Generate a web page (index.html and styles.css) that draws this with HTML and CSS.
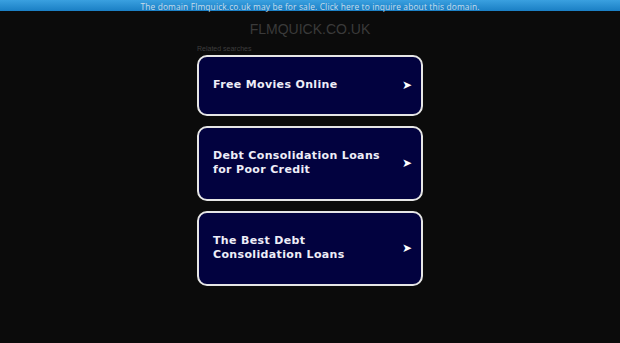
FILE: index.html
```html
<!DOCTYPE html>
<html lang="en">
<head>
    <meta charset="UTF-8">
    <title>flmquick.co.uk</title>
    <link rel="stylesheet" href="styles.css">
</head>
<body>
    <div class="sale-bar">
        <a href="#">The domain Flmquick.co.uk may be for sale. Click here to inquire about this domain.</a>
    </div>

    <div class="content">
        <div class="domain">FLMQUICK.CO.UK</div>

        <div class="related">
            <div class="related-title">Related searches</div>

            <a href="#" class="search-link">
                <span class="search-text">Free Movies Online</span>
                <span class="search-arrow">➤</span>
            </a>

            <a href="#" class="search-link">
                <span class="search-text">Debt Consolidation Loans for Poor Credit</span>
                <span class="search-arrow">➤</span>
            </a>

            <a href="#" class="search-link">
                <span class="search-text">The Best Debt Consolidation Loans</span>
                <span class="search-arrow">➤</span>
            </a>
        </div>
    </div>
</body>
</html>
```

FILE: styles.css
```css
body {
    margin: 0;
    padding: 0;
    background: #0b0b0b;
    font-family: "Liberation Sans", Arial, sans-serif;
}

.sale-bar {
    height: 11px;
    background: linear-gradient(to bottom, #3aa0e0 0%, #1a7fc4 100%);
    text-align: center;
    line-height: 10px;
}

.sale-bar a {
    color: #c8dcea;
    font-family: "Open Sans", sans-serif;
    font-size: 8.4px;
    letter-spacing: 0.15px;
    text-decoration: none;
}

.content {
    display: flex;
    flex-direction: column;
    align-items: center;
}

.domain {
    margin-top: 11px;
    height: 15px;
    line-height: 15px;
    font-size: 14px;
    color: #3a3a3a;
}

.related {
    width: 226px;
    margin-top: 7px;
}

.related-title {
    font-size: 7px;
    color: #3e3e3e;
    height: 11px;
    line-height: 10px;
}

.search-link {
    display: flex;
    align-items: center;
    justify-content: space-between;
    box-sizing: border-box;
    padding: 21px 9px 21px 14px;
    margin-bottom: 10px;
    background: #02023f;
    border: 2px solid #e6e6e6;
    border-radius: 10px;
    color: #eeeef8;
    text-decoration: none;
}

.search-text {
    max-width: 180px;
    font-family: "DejaVu Sans", sans-serif;
    font-weight: bold;
    font-size: 11px;
    line-height: 14.5px;
    letter-spacing: 0.35px;
}

.search-arrow {
    font-family: "DejaVu Sans", sans-serif;
    font-size: 12px;
    color: #ffffff;
}
```
